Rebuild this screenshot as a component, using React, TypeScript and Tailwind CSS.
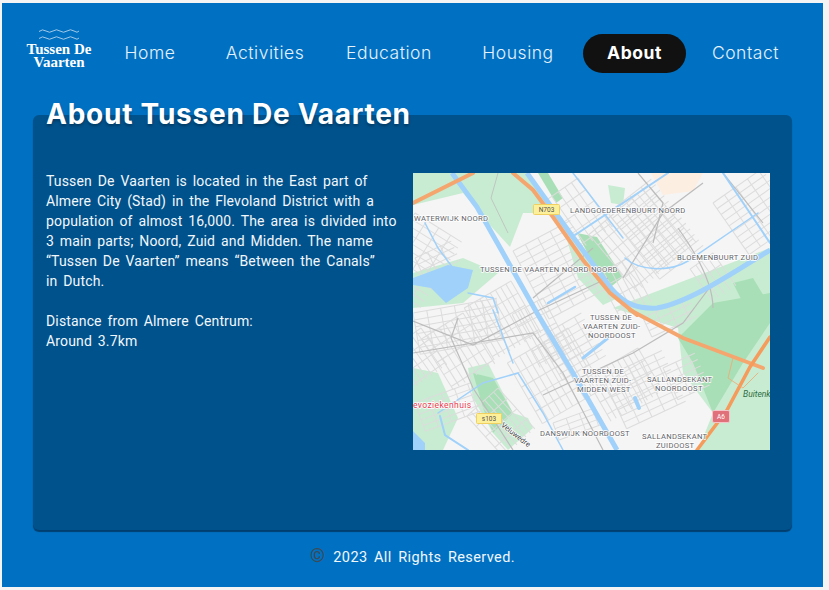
const navItems = ["Home", "Activities", "Education", "Housing", "About", "Contact"];

const navWidths: Record<string, string> = {
  Home: "w-[52px] mr-[50px]",
  Activities: "w-[78px] mr-[41px]",
  Education: "w-[88px] mr-[49px]",
  Housing: "w-[72px] mr-[29px]",
  About: "w-[103px] mr-[26px]",
  Contact: "w-[67px]",
};

const Logo = () => (
  <div className="w-[66px] -mt-[10px] flex flex-col items-center font-['Liberation_Serif',serif] font-bold text-white text-[15px] leading-[13px] text-center">
    <svg width="42" height="13" viewBox="0 0 42 13" fill="none" stroke="#b5d3ea" strokeWidth="0.9" className="mb-[2px]">
      <path d="M1 3.5 Q4.5 0.5 8 3 T15 3 T22 3 T29 3 T36 3 T41 3" />
      <path d="M1 10.5 Q4.5 7.5 8 10 T15 10 T22 10 T29 10 T36 10 T41 10" />
    </svg>
    <div className="whitespace-nowrap">
      Tussen De
      <br />
      Vaarten
    </div>
  </div>
);

const Nav = () => (
  <nav className="flex items-center pl-[24px] pt-[31px] h-[70px]">
    <Logo />
    <div className="flex items-center ml-[32px] font-['Inter',sans-serif] text-[17.5px] tracking-[0.55px]">
      {navItems.map((item) => (
        <a
          key={item}
          className={`${navWidths[item]} h-[39px] flex items-center justify-center whitespace-nowrap ${
            item === "About"
              ? "bg-[#111111] rounded-full font-bold text-white"
              : "font-light text-[#e6f2fb]"
          }`}
        >
          {item}
        </a>
      ))}
    </div>
  </nav>
);

// parallel street strips: x, y, length, count, angle, spacing
const strips: [number, number, number, number, number, number][] = [
  [2, 40, 55, 12, 32, 7],
  [2, 85, 40, 4, -25, 7],
  [165, 5, 60, 6, 55, 8],
  [195, 40, 55, 13, -38, 7],
  [235, 12, 75, 12, 50, 7],
  [300, 30, 60, 10, -35, 7],
  [215, 85, 50, 6, 62, 7],
  [300, 80, 40, 5, 55, 7],
  [100, 78, 65, 12, -28, 7],
  [98, 108, 60, 10, 60, 6],
  [0, 140, 85, 7, -10, 7],
  [50, 140, 60, 8, 58, 7],
  [8, 155, 45, 8, 55, 6],
  [125, 165, 50, 8, -30, 7],
  [155, 155, 70, 11, 60, 7],
  [190, 205, 65, 9, -25, 7],
  [225, 175, 50, 11, 60, 6],
  [250, 195, 35, 6, -25, 7],
  [2, 230, 60, 6, -20, 6],
  [85, 215, 55, 8, 48, 6],
  [130, 125, 60, 6, 62, 7],
  [230, 145, 50, 4, -25, 7],
  [140, 250, 45, 4, -20, 6],
];

const labels: [string, number, number][] = [
  ["WATERWIJK NOORD", 1, 48],
  ["LANDGOEDERENBUURT NOORD", 157, 40],
  ["BLOEMENBUURT ZUID", 264, 87],
  ["TUSSEN DE VAARTEN NOORD NOORD", 67, 99],
  ["TUSSEN DE", 177, 147],
  ["VAARTEN ZUID-", 170, 156],
  ["NOORDOOST", 175, 165],
  ["TUSSEN DE", 169, 201],
  ["VAARTEN ZUID-", 161, 210],
  ["MIDDEN WEST", 164, 219],
  ["SALLANDSEKANT", 234, 209],
  ["NOORDOOST", 242, 218],
  ["DANSWIJK NOORDOOST", 127, 263],
  ["SALLANDSEKANT", 229, 266],
  ["ZUIDOOST", 243, 275],
];

const MapImage = () => (
  <svg width="357" height="277" viewBox="0 0 357 277" className="block shrink-0 bg-[#f5f5f5]">
    <g fill="#c8ecd2">
      <path d="M0 0 L115 0 L150 55 L165 75 L205 125 L190 132 L165 105 L154 67 L137 40 L110 40 L97 74 L75 50 L50 20 L0 32 Z" />
      <path d="M0 100 L50 85 L85 100 L50 130 L0 135 Z" />
      <path d="M200 135 L357 75 L357 277 L285 277 L300 240 L270 200 L265 155 Z" />
      <path d="M0 195 L25 200 L45 245 L30 277 L0 277 Z" />
      <path d="M55 195 L75 190 L100 240 L115 245 L120 255 L95 277 L80 260 L60 225 Z" />
      <path d="M195 12 L212 15 L210 32 L198 30 Z" />
    </g>
    <g fill="#a9dfb6">
      <path d="M125 0 L135 0 L150 25 L143 30 Z" />
      <path d="M164 60 L184 64 L210 104 L194 117 Z" />
      <path d="M265 165 L300 130 L357 120 L357 150 L330 190 L300 240 L280 190 Z" />
      <path d="M60 200 L80 205 L100 240 L80 260 L70 235 Z" />
      <path d="M320 110 L340 105 L355 130 L335 140 Z" />
    </g>
    <path d="M238 0 L290 0 L280 18 L250 22 Z" fill="#fdeee2" />
    <g stroke="#dcdcdc" strokeWidth="1">
      {strips.map(([x, y, len, count, angle, gap], i) => (
        <g key={i} transform={`translate(${x} ${y}) rotate(${angle})`}>
          {Array.from({ length: count }, (_, n) => (
            <line key={n} x1="0" y1={n * gap} x2={len} y2={n * gap} />
          ))}
          {Array.from({ length: Math.floor(len / 14) + 1 }, (_, n) => (
            <line key={n} x1={n * 14} y1="0" x2={n * 14} y2={(count - 1) * gap} />
          ))}
        </g>
      ))}
    </g>
    <g fill="none" stroke="#bcbcbc" strokeWidth="1.2">
      <path d="M0 148 L60 172 L120 140 L195 105" />
      <path d="M45 145 L38 165 L60 215 L100 277" />
      <path d="M0 180 L120 160 L150 200 L190 277" />
      <path d="M120 125 L180 75" />
      <path d="M130 222 L220 180 L270 150 L300 110" />
      <path d="M210 105 L250 40 L290 10" />
      <path d="M265 55 C 290 90 300 115 300 135" />
      <path d="M85 0 L78 25 L95 60" strokeWidth="0.8" />
      <path d="M225 0 L250 30 L240 70" />
      <path d="M310 0 L350 50" />
    </g>
    <g fill="none" stroke="#a0d1fa" strokeLinecap="round">
      <path d="M39 0 L64 34 L124 140 L160 200 L204 277" strokeWidth="5" strokeLinecap="butt" />
      <path d="M114 0 L157 60 L197 114 C 212 132 225 136 244 135 C 275 130 320 100 357 77" strokeWidth="5" strokeLinecap="butt" />
      <path d="M162 62 L240 10 L255 0" strokeWidth="2" />
      <path d="M160 0 L210 65" strokeWidth="1.5" />
      <path d="M212 85 C 225 97 255 100 275 88 L345 40" strokeWidth="1.5" />
      <path d="M310 0 L357 70" strokeWidth="2" />
      <path d="M12 50 L25 75 L40 95" strokeWidth="1.5" />
      <path d="M55 120 L80 125 L85 140" strokeWidth="1.5" />
      <path d="M25 240 L70 210 L105 200 L130 240 L150 277" strokeWidth="1.5" />
      <path d="M80 137 L100 190" strokeWidth="1.5" />
      <path d="M27 243 L32 262 L55 277" strokeWidth="2" />
      <path d="M170 185 L195 165" strokeWidth="3" />
      <path d="M135 130 L162 114" strokeWidth="2.5" />
      <path d="M222 225 L226 235" strokeWidth="4" />
    </g>
    <path d="M0 105 L35 92 L60 97 L55 115 L33 130 L18 115 L0 112 Z" fill="#a0d1fa" />
    <path d="M0 258 L12 270 L12 277 L0 277 Z" fill="#a0d1fa" />
    <g fill="none" stroke="#f5a66f" strokeLinecap="round">
      <path d="M0 30 L60 0" strokeWidth="4" />
      <path d="M100 0 L120 17 L140 44 L170 87 L197 120 L224 142" strokeWidth="4" />
      <path d="M217 137 L270 165 L350 195" strokeWidth="4" />
      <path d="M357 164 L337 194 L314 237 L284 277" strokeWidth="3.5" stroke="#f59b5c" />
      <path d="M320 185 L315 205 L330 215 L345 200" strokeWidth="0.8" />
    </g>
    <g fontFamily="Roboto, sans-serif" fontSize="7.6" fill="#5f6368" stroke="#ffffff" strokeWidth="1.5" paintOrder="stroke" letterSpacing="0.3">
      {labels.map(([text, x, y]) => (
        <text key={text + y} x={x} y={y}>{text}</text>
      ))}
    </g>
    <text x="0" y="235" fontFamily="Roboto, sans-serif" fontSize="8.5" letterSpacing="0.4" fill="#e8384d" stroke="#ffffff" strokeWidth="1.5" paintOrder="stroke">evoziekenhuis</text>
    <text x="330" y="224" fontFamily="Roboto, sans-serif" fontSize="8.5" fontStyle="italic" fill="#2f6b3c">Buitenk</text>
    <text x="90" y="258" fontFamily="Roboto, sans-serif" fontSize="7.5" fill="#444444" stroke="#ffffff" strokeWidth="1.2" paintOrder="stroke" transform="rotate(38 96 252)">Veluwedre</text>
    <g fontFamily="Roboto, sans-serif" fontSize="6.5" textAnchor="middle">
      <rect x="120.500" y="31.500" width="26" height="10" rx="1" fill="#fdf09a" stroke="#f0d060" />
      <text x="133.500" y="39" fill="#555555">N703</text>
      <rect x="63.500" y="240.500" width="25" height="10" rx="1" fill="#fdf09a" stroke="#f0d060" />
      <text x="76" y="248" fill="#555555">s103</text>
      <rect x="299.500" y="237.500" width="17" height="12" rx="1.500" fill="#e0707a" stroke="#f4c4c8" />
      <text x="308" y="246" fill="#ffffff">A6</text>
    </g>
  </svg>
);

export default function App() {
  return (
    <div className="h-[590px] w-[829px] overflow-hidden bg-[#f4f4f4] pt-[3px] pb-[3px] pl-[2px] pr-[6px]">
      <div className="h-full bg-[#0071c2] flex flex-col">
        <Nav />
        <main className="mx-[31px] mt-[42px] h-[415px] rounded-[6px] bg-[#00528c] shadow-[0_2px_1px_rgba(0,50,90,0.8)] px-[13px]">
          <h1 className="-mt-[18px] font-['Inter',sans-serif] font-bold text-white text-[28px] leading-[34px] tracking-[0.75px] [text-shadow:0_2px_3px_rgba(0,0,0,0.3)] whitespace-nowrap">
            About Tussen De Vaarten
          </h1>
          <div className="flex justify-between mt-[42px] mr-[9px]">
            <div className="w-[356px] -mt-[2px] font-['Roboto',sans-serif] text-[14px] leading-[20px] tracking-[0.15px] [word-spacing:2.2px] text-[#f2f7fb]">
              <p>
                Tussen De Vaarten is located in the East part of Almere City (Stad) in the Flevoland District with a
                population of almost 16,000. The area is divided into 3 main parts; Noord, Zuid and Midden. The name
                “Tussen De Vaarten” means “Between the Canals”
                <br />
                in Dutch.
              </p>
              <p className="mt-[20px]">Distance from Almere Centrum:</p>
              <p>Around 3.7km</p>
            </div>
            <MapImage />
          </div>
        </main>
        <footer className="flex items-center justify-center mt-[17px] font-['Roboto',sans-serif] text-[14.5px] tracking-[0.4px] [word-spacing:2.5px] text-[#f2f7fb]">
          <span className="text-[#3d4a55] text-[19px] leading-none mr-[8px] -mt-[4px]">©</span>
          <span>2023 All Rights Reserved.</span>
        </footer>
      </div>
    </div>
  );
}
